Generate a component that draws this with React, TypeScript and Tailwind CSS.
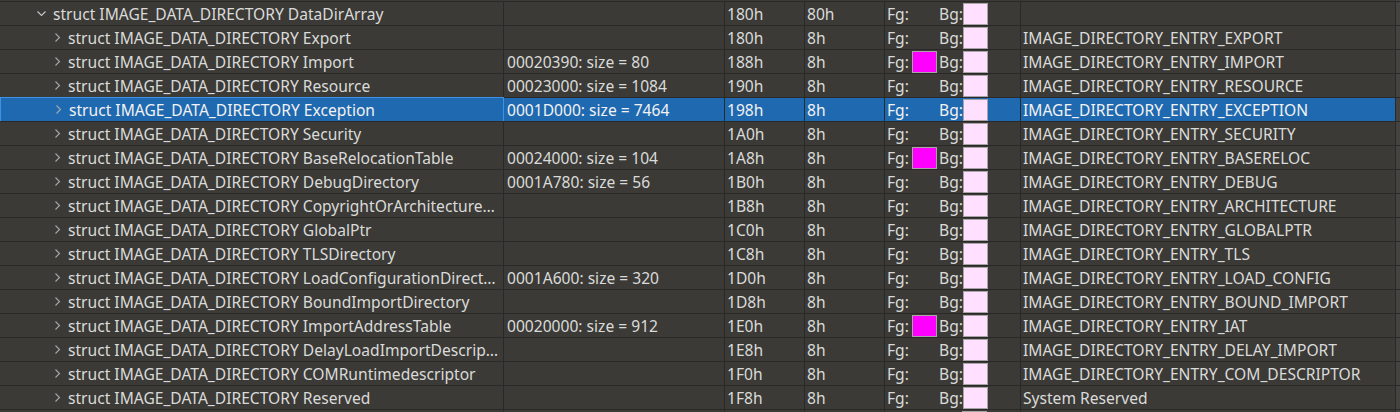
import React from 'react';

interface Row {
  name: string;
  value: string;
  offset: string;
  size: string;
  fg: boolean;
  comment: string;
}

const rows: Row[] = [
  { name: 'Export', value: '', offset: '180h', size: '8h', fg: false, comment: 'IMAGE_DIRECTORY_ENTRY_EXPORT' },
  { name: 'Import', value: '00020390: size = 80', offset: '188h', size: '8h', fg: true, comment: 'IMAGE_DIRECTORY_ENTRY_IMPORT' },
  { name: 'Resource', value: '00023000: size = 1084', offset: '190h', size: '8h', fg: false, comment: 'IMAGE_DIRECTORY_ENTRY_RESOURCE' },
  { name: 'Exception', value: '0001D000: size = 7464', offset: '198h', size: '8h', fg: false, comment: 'IMAGE_DIRECTORY_ENTRY_EXCEPTION' },
  { name: 'Security', value: '', offset: '1A0h', size: '8h', fg: false, comment: 'IMAGE_DIRECTORY_ENTRY_SECURITY' },
  { name: 'BaseRelocationTable', value: '00024000: size = 104', offset: '1A8h', size: '8h', fg: true, comment: 'IMAGE_DIRECTORY_ENTRY_BASERELOC' },
  { name: 'DebugDirectory', value: '0001A780: size = 56', offset: '1B0h', size: '8h', fg: false, comment: 'IMAGE_DIRECTORY_ENTRY_DEBUG' },
  { name: 'CopyrightOrArchitectureSpecificData', value: '', offset: '1B8h', size: '8h', fg: false, comment: 'IMAGE_DIRECTORY_ENTRY_ARCHITECTURE' },
  { name: 'GlobalPtr', value: '', offset: '1C0h', size: '8h', fg: false, comment: 'IMAGE_DIRECTORY_ENTRY_GLOBALPTR' },
  { name: 'TLSDirectory', value: '', offset: '1C8h', size: '8h', fg: false, comment: 'IMAGE_DIRECTORY_ENTRY_TLS' },
  { name: 'LoadConfigurationDirectory', value: '0001A600: size = 320', offset: '1D0h', size: '8h', fg: false, comment: 'IMAGE_DIRECTORY_ENTRY_LOAD_CONFIG' },
  { name: 'BoundImportDirectory', value: '', offset: '1D8h', size: '8h', fg: false, comment: 'IMAGE_DIRECTORY_ENTRY_BOUND_IMPORT' },
  { name: 'ImportAddressTable', value: '00020000: size = 912', offset: '1E0h', size: '8h', fg: true, comment: 'IMAGE_DIRECTORY_ENTRY_IAT' },
  { name: 'DelayLoadImportDescriptors', value: '', offset: '1E8h', size: '8h', fg: false, comment: 'IMAGE_DIRECTORY_ENTRY_DELAY_IMPORT' },
  { name: 'COMRuntimedescriptor', value: '', offset: '1F0h', size: '8h', fg: false, comment: 'IMAGE_DIRECTORY_ENTRY_COM_DESCRIPTOR' },
  { name: 'Reserved', value: '', offset: '1F8h', size: '8h', fg: false, comment: 'System Reserved' },
];

function Chevron({ open }: { open?: boolean }) {
  return open ? (
    <svg width="9" height="6" viewBox="0 0 9 6" className="shrink-0">
      <polyline points="0.5,0.5 4.5,4.5 8.5,0.5" fill="none" stroke="#c8c8c8" strokeWidth="1.1" />
    </svg>
  ) : (
    <svg width="6" height="9" viewBox="0 0 6 9" className="shrink-0">
      <polyline points="0.5,0.5 4.5,4.5 0.5,8.5" fill="none" stroke="#a8a8a8" strokeWidth="1.1" />
    </svg>
  );
}

function Swatch({ color }: { color: string }) {
  return <span className={`inline-block w-[25px] h-[22px] border border-[#a9a3a8] ${color}`} />;
}

function ColorCell({ fg }: { fg: boolean }) {
  return (
    <div className="w-[136px] shrink-0 border-r border-[#2a2927] flex items-center pl-[2px]">
      <span className="w-[25px] pt-px">Fg:</span>
      {fg ? <Swatch color="bg-[#ff00ff]" /> : <span className="w-[25px]" />}
      <span className="ml-[2px] w-[24px] pt-px">Bg:</span>
      <Swatch color="bg-[#ffe1ff]" />
    </div>
  );
}

function TableRow({
  indent,
  open,
  name,
  value,
  offset,
  size,
  fg,
  comment,
  selected,
}: Row & { indent: number; open?: boolean; selected?: boolean }) {
  return (
    <div
      className={`flex h-[24px] leading-[23px] border-b border-[#2a2927] ${selected ? 'bg-[#1f69b0] text-[#f2f2f2]' : ''}`}
    >
      <div
        className={`w-[504px] shrink-0 flex items-center border-r ${
          selected ? 'border-[#3e92e4] border-l border-t -mt-px h-[24px]' : 'border-[#2a2927]'
        }`}
        style={{ paddingLeft: indent }}
      >
        <Chevron open={open} />
        <span className="truncate ml-[7px] pr-[2px] pt-px">
          struct IMAGE_DATA_DIRECTORY {name}
        </span>
      </div>
      <div className="w-[221px] shrink-0 border-r border-[#2a2927] flex items-center pl-[3px] pt-px">{value}</div>
      <div className="w-[80px] shrink-0 border-r border-[#2a2927] flex items-center pl-[2px] pt-px">{offset}</div>
      <div className="w-[80px] shrink-0 border-r border-[#2a2927] flex items-center pl-[2px] pt-px">{size}</div>
      <ColorCell fg={fg} />
      <div className="w-[375px] shrink-0 border-r border-[#2a2927] flex items-center pl-[2px] pt-px truncate">{comment}</div>
      <div className="flex-1 bg-[#45433f]" />
    </div>
  );
}

export default function App() {
  return (
    <div
      className="w-[1400px] h-[412px] overflow-hidden bg-[#3b3a36] text-[#dadada] text-[15.6px]"
      style={{ fontFamily: '"Noto Sans", "Open Sans", sans-serif' }}
    >
      <div className="h-[2px] border-b border-[#2a2927] flex">
        <div className="w-[1396px]" />
        <div className="flex-1 bg-[#45433f]" />
      </div>
      <TableRow
        indent={37}
        open
        name="DataDirArray"
        value=""
        offset="180h"
        size="80h"
        fg={false}
        comment=""
      />
      {rows.map((r, i) => (
        <TableRow key={r.name} indent={55} {...r} selected={i === 3} />
      ))}
      <div className="flex h-[24px]">
        <div className="w-[504px] shrink-0 border-r border-[#2a2927]" />
        <div className="w-[221px] shrink-0 border-r border-[#2a2927]" />
        <div className="w-[80px] shrink-0 border-r border-[#2a2927]" />
        <div className="w-[80px] shrink-0 border-r border-[#2a2927]" />
        <div className="w-[136px] shrink-0 border-r border-[#2a2927] flex pt-px pl-[77px]">
          <Swatch color="bg-[#ffe1ff]" />
        </div>
        <div className="w-[375px] shrink-0 border-r border-[#2a2927]" />
        <div className="flex-1 bg-[#45433f]" />
      </div>
    </div>
  );
}
